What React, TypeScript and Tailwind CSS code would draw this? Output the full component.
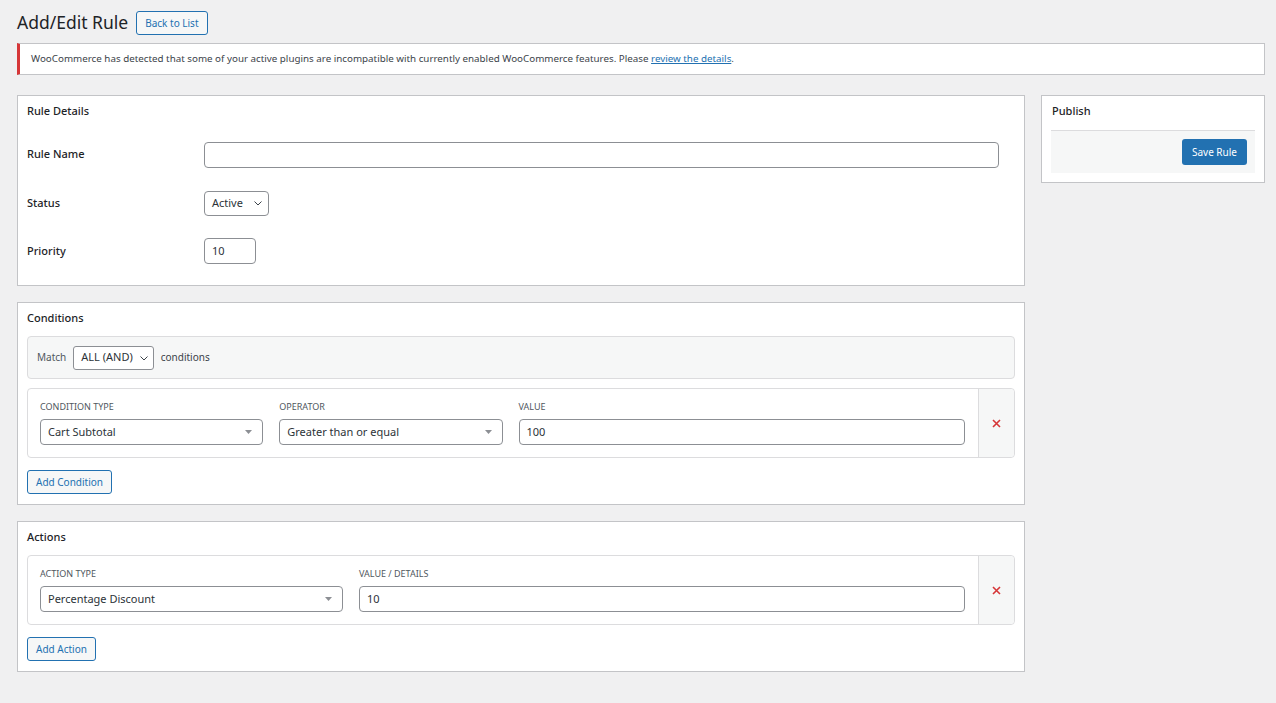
import React from "react";

const font = { fontFamily: '"Noto Sans", "Open Sans", sans-serif' };

const Chevron: React.FC = () => (
  <svg width="10" height="10" viewBox="0 0 10 10" className="shrink-0">
    <path d="M1.5 3.5 L5 7 L8.5 3.5" fill="none" stroke="#3c434a" strokeWidth="1" />
  </svg>
);

const Caret: React.FC = () => (
  <svg width="7" height="4" viewBox="0 0 7 4" className="shrink-0">
    <path d="M0 0 H7 L3.5 4 Z" fill="#8c8f94" />
  </svg>
);

const RemoveX: React.FC = () => (
  <svg width="9" height="9" viewBox="0 0 9 9">
    <path d="M1 1 L8 8 M8 1 L1 8" stroke="#d63638" strokeWidth="1.6" />
  </svg>
);

const TextBox: React.FC<{ value?: string; className?: string }> = ({ value = "", className = "" }) => (
  <div className={`flex items-center h-[26px] border border-[#8c8f94] rounded-[4px] bg-white px-[7px] text-[11px] text-[#2c3338] ${className}`}>
    {value}
  </div>
);

const DropBox: React.FC<{ value: string; className?: string }> = ({ value, className = "" }) => (
  <div className={`flex items-center justify-between h-[26px] border border-[#8c8f94] rounded-[4px] bg-white pl-[7px] pr-[10px] text-[11px] text-[#2c3338] ${className}`}>
    <span>{value}</span>
    <Caret />
  </div>
);

const Panel: React.FC<{ title: string; children: React.ReactNode }> = ({ title, children }) => (
  <div className="bg-white border border-[#c3c4c7] px-[9px] pt-[8px] pb-[10px]">
    <h2 className="text-[11px] font-medium text-[#1d2327] leading-[14px] mb-[11px]">{title}</h2>
    {children}
  </div>
);

const OutlineButton: React.FC<{ label: string }> = ({ label }) => (
  <div className="flex">
    <button className="h-[24px] px-[8px] border border-[#2271b1] rounded-[3px] bg-[#f6f7f7] text-[#2271b1] text-[10px] leading-none">
      {label}
    </button>
  </div>
);

const FieldLabel: React.FC<{ text: string }> = ({ text }) => (
  <div className="text-[9px] uppercase text-[#50575e] leading-[12px] mb-[6px]">{text}</div>
);

const RemoveCell: React.FC = () => (
  <div className="w-[36px] flex items-center justify-center bg-[#f6f7f7] border-l border-[#dcdcde] rounded-r-[4px]">
    <RemoveX />
  </div>
);

export default function App() {
  return (
    <div className="min-h-[703px] bg-[#f0f0f1] pl-[17px] pr-[11px] pt-[11px] text-[#1d2327]" style={font}>
      <div className="flex items-center gap-[8px] h-[24px]">
        <h1 className="text-[17.5px] font-normal leading-none text-[#1d2327]">Add/Edit Rule</h1>
        <OutlineButton label="Back to List" />
      </div>

      <div className="mt-[8px] flex items-center h-[32px] bg-white border border-[#c3c4c7] border-l-[3px] border-l-[#d63638] pl-[11px] text-[9.8px] text-[#3c434a]">
        <p>
          WooCommerce has detected that some of your active plugins are incompatible with currently enabled WooCommerce
          features. Please <span className="text-[#2271b1] underline">review the details</span>.
        </p>
      </div>

      <div className="mt-[20px] flex gap-[16px] items-start">
        <div className="flex-1 flex flex-col gap-[16px]">
          <Panel title="Rule Details">
            <div className="flex flex-col pt-[1px]">
              <div className="flex items-center h-[49px]">
                <div className="w-[177px] text-[11px] font-medium">Rule Name</div>
                <TextBox className="w-[795px] h-[25px]" />
              </div>
              <div className="flex items-center h-[48px]">
                <div className="w-[177px] text-[11px] font-medium">Status</div>
                <div className="flex items-center gap-[10px] h-[25px] border border-[#8c8f94] rounded-[4px] bg-white pl-[7px] pr-[5px] text-[11px] text-[#2c3338]">
                  <span>Active</span>
                  <Chevron />
                </div>
              </div>
              <div className="flex items-center h-[48px]">
                <div className="w-[177px] text-[11px] font-medium">Priority</div>
                <TextBox value="10" className="w-[52px] h-[25px]" />
              </div>
            </div>
          </Panel>

          <Panel title="Conditions">
            <div className="flex items-center gap-[7px] h-[43px] bg-[#f6f7f7] border border-[#dcdcde] rounded-[4px] pl-[9px] text-[10px] text-[#50575e]">
              <span>Match</span>
              <div className="flex items-center gap-[6px] h-[24px] border border-[#8c8f94] rounded-[3px] bg-white pl-[7px] pr-[4px] text-[11px] text-[#2c3338]">
                <span>ALL (AND)</span>
                <Chevron />
              </div>
              <span className="text-[#3c434a]">conditions</span>
            </div>

            <div className="mt-[9px] flex h-[70px] border border-[#dcdcde] rounded-[4px] bg-white">
              <div className="flex-1 flex gap-[16px] pl-[12px] pr-[13px] pt-[12px]">
                <div className="flex-1">
                  <FieldLabel text="Condition Type" />
                  <DropBox value="Cart Subtotal" />
                </div>
                <div className="flex-1">
                  <FieldLabel text="Operator" />
                  <DropBox value="Greater than or equal" />
                </div>
                <div className="flex-[2]">
                  <FieldLabel text="Value" />
                  <TextBox value="100" />
                </div>
              </div>
              <RemoveCell />
            </div>

            <div className="mt-[12px]">
              <OutlineButton label="Add Condition" />
            </div>
          </Panel>

          <Panel title="Actions">
            <div className="flex h-[70px] border border-[#dcdcde] rounded-[4px] bg-white">
              <div className="flex-1 flex gap-[16px] pl-[12px] pr-[13px] pt-[12px]">
                <div className="flex-1">
                  <FieldLabel text="Action Type" />
                  <DropBox value="Percentage Discount" />
                </div>
                <div className="flex-[2]">
                  <FieldLabel text="Value / Details" />
                  <TextBox value="10" />
                </div>
              </div>
              <RemoveCell />
            </div>
            <div className="mt-[12px]">
              <OutlineButton label="Add Action" />
            </div>
          </Panel>
        </div>

        <div className="w-[224px] bg-white border border-[#c3c4c7] px-[9px] pt-[8px] pb-[9px]">
          <h2 className="text-[11px] font-medium leading-[14px] mb-[12px] pl-[1px]">Publish</h2>
          <div className="flex justify-end bg-[#f6f7f7] border-t border-[#dcdcde] pt-[8px] pb-[8px] pr-[8px]">
            <button className="h-[26px] px-[10px] rounded-[3px] bg-[#2271b1] text-white text-[10px]">Save Rule</button>
          </div>
        </div>
      </div>
    </div>
  );
}
